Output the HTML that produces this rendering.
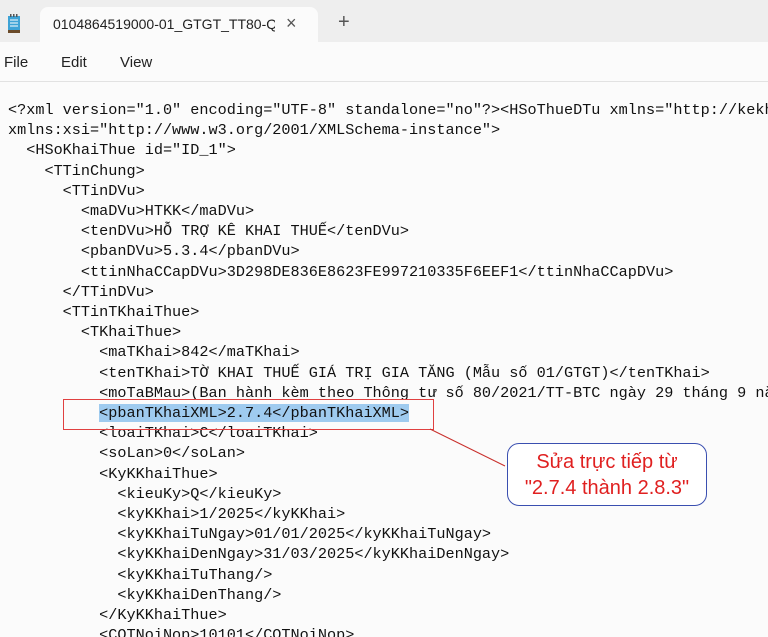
<!DOCTYPE html>
<html><head><meta charset="utf-8"><style>
body{margin:0;width:768px;height:637px;overflow:hidden;background:#fbfbfb;position:relative;font-family:"Liberation Sans",sans-serif}
.tabbar{position:absolute;left:0;top:0;width:768px;height:42px;background:#eeeeee}
.tab{position:absolute;left:40px;top:7px;width:278px;height:35px;background:#fbfbfb;border-radius:8px 8px 0 0}
.tab .t{position:absolute;left:13px;top:9px;width:222px;overflow:hidden;white-space:nowrap;font-size:14px;color:#222}
.menu{position:absolute;left:0;top:42px;width:768px;height:39px;background:#fbfbfb;border-bottom:1px solid #e2e2e2}
.menu span{position:absolute;top:12px;font-size:15px;color:#222}
pre{position:absolute;left:8px;top:100px;width:760px;height:537px;overflow:hidden;margin:0;font-family:"Liberation Mono",monospace;font-size:15.2px;line-height:20.2px;color:#111;white-space:pre}
.hl{background:#9fcbef}
</style></head><body>
<div class="tabbar">
 <svg style="position:absolute;left:7px;top:14px" width="14" height="20"><rect x="1" y="2" width="12" height="16" fill="#3ea3d6"/><rect x="1" y="16" width="12" height="3" fill="#6b4b2a"/><g stroke="#fff" stroke-width="1"><line x1="3" y1="6" x2="11" y2="6"/><line x1="3" y1="9" x2="11" y2="9"/><line x1="3" y1="12" x2="11" y2="12"/></g><g fill="#555"><rect x="3" y="0" width="1.5" height="3"/><rect x="6" y="0" width="1.5" height="3"/><rect x="9" y="0" width="1.5" height="3"/></g></svg>
 <div class="tab"><span class="t">0104864519000-01_GTGT_TT80-Q12</span><span style="position:absolute;left:246px;top:6px;font-size:18px;color:#555">×</span></div>
 <span style="position:absolute;left:338px;top:11px;font-size:20px;color:#555">+</span>
</div>
<div class="menu"><span style="left:4px">File</span><span style="left:61px">Edit</span><span style="left:120px">View</span></div>
<pre>&lt;?xml version="1.0" encoding="UTF-8" standalone="no"?&gt;&lt;HSoThueDTu xmlns="http://kekhaithue
xmlns:xsi="http://www.w3.org/2001/XMLSchema-instance"&gt;
  &lt;HSoKhaiThue id="ID_1"&gt;
    &lt;TTinChung&gt;
      &lt;TTinDVu&gt;
        &lt;maDVu&gt;HTKK&lt;/maDVu&gt;
        &lt;tenDVu&gt;HỖ TRỢ KÊ KHAI THUẾ&lt;/tenDVu&gt;
        &lt;pbanDVu&gt;5.3.4&lt;/pbanDVu&gt;
        &lt;ttinNhaCCapDVu&gt;3D298DE836E8623FE997210335F6EEF1&lt;/ttinNhaCCapDVu&gt;
      &lt;/TTinDVu&gt;
      &lt;TTinTKhaiThue&gt;
        &lt;TKhaiThue&gt;
          &lt;maTKhai&gt;842&lt;/maTKhai&gt;
          &lt;tenTKhai&gt;TỜ KHAI THUẾ GIÁ TRỊ GIA TĂNG (Mẫu số 01/GTGT)&lt;/tenTKhai&gt;
          &lt;moTaBMau&gt;(Ban hành kèm theo Thông tư số 80/2021/TT-BTC ngày 29 tháng 9 năm
          <span class="hl">&lt;pbanTKhaiXML&gt;2.7.4&lt;/pbanTKhaiXML&gt;</span>
          &lt;loaiTKhai&gt;C&lt;/loaiTKhai&gt;
          &lt;soLan&gt;0&lt;/soLan&gt;
          &lt;KyKKhaiThue&gt;
            &lt;kieuKy&gt;Q&lt;/kieuKy&gt;
            &lt;kyKKhai&gt;1/2025&lt;/kyKKhai&gt;
            &lt;kyKKhaiTuNgay&gt;01/01/2025&lt;/kyKKhaiTuNgay&gt;
            &lt;kyKKhaiDenNgay&gt;31/03/2025&lt;/kyKKhaiDenNgay&gt;
            &lt;kyKKhaiTuThang/&gt;
            &lt;kyKKhaiDenThang/&gt;
          &lt;/KyKKhaiThue&gt;
          &lt;CQTNoiNop&gt;10101&lt;/CQTNoiNop&gt;</pre>
<div style="position:absolute;left:63px;top:399px;width:369px;height:29px;border:1px solid #e04040"></div>
<svg style="position:absolute;left:0;top:0" width="768" height="637"><line x1="430" y1="429" x2="505" y2="466" stroke="#c9302c" stroke-width="1"/></svg>
<div style="position:absolute;left:507px;top:443px;width:200px;height:63px;border:1px solid #3a4fb0;border-radius:12px;background:#fff;color:#e02020;font-size:20px;line-height:26px;text-align:center;padding-top:5px;box-sizing:border-box">Sửa trực tiếp từ<br>"2.7.4 thành 2.8.3"</div>
</body></html>
